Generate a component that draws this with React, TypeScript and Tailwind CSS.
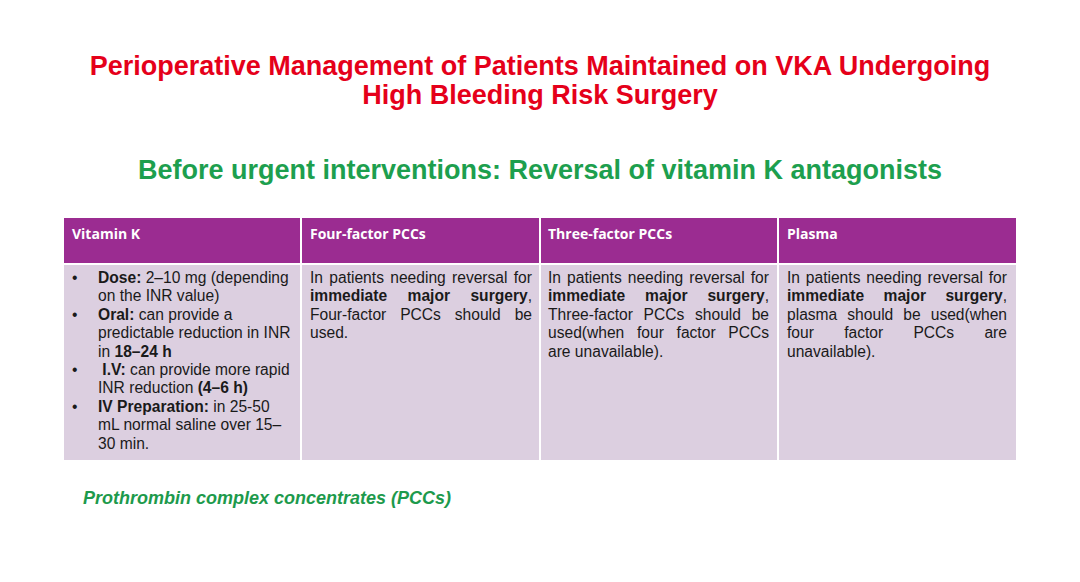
import React from "react";

function Bullet({ children }: { children: React.ReactNode }) {
  return (
    <li className="flex">
      <span className="w-[34px] shrink-0 pl-[8px]">•</span>
      <span>{children}</span>
    </li>
  );
}

const headCls =
  "bg-[#9b2c91] h-[45px] pt-[6px] text-white font-bold text-[14px] leading-[19px]";
const bodyCls = "bg-[#dccfe0] h-[195px] pt-[4px]";

export default function App() {
  return (
    <div
      className="w-[1080px] h-[582px] bg-white overflow-hidden"
      style={{ fontFamily: '"Liberation Sans", Arial, sans-serif' }}
    >
      <div className="pt-[52px] text-center text-[#e5001a] font-bold text-[27px] leading-[29px]">
        <div>Perioperative Management of Patients Maintained on VKA Undergoing</div>
        <div>High Bleeding Risk Surgery</div>
      </div>
      <div className="mt-[46px] text-center text-[#1d9f4e] font-bold text-[27px] leading-[28px]">
        Before urgent interventions: Reversal of vitamin K antagonists
      </div>
      <div className="ml-[64px] mt-[34px] w-[952px] grid grid-cols-[236px_237px_236px_237px] gap-x-[2px] gap-y-[2px] text-[15.6px] leading-[18.4px] text-[#1a1a1a]">
        <div className={headCls + " pl-[8px]"} style={{ fontFamily: '"Open Sans", sans-serif' }}>Vitamin K</div>
        <div className={headCls + " pl-[8px]"} style={{ fontFamily: '"Open Sans", sans-serif' }}>Four-factor PCCs</div>
        <div className={headCls + " pl-[7px]"} style={{ fontFamily: '"Open Sans", sans-serif' }}>Three-factor PCCs</div>
        <div className={headCls + " pl-[8px]"} style={{ fontFamily: '"Open Sans", sans-serif' }}>Plasma</div>
        <div className={bodyCls + " pr-[8px]"}>
          <ul>
            <Bullet><b>Dose:</b> 2–10 mg (depending on the INR value)</Bullet>
            <Bullet><b>Oral:</b> can provide a predictable reduction in INR in <b>18–24 h</b></Bullet>
            <Bullet>&nbsp;<b>I.V:</b> can provide more rapid INR reduction <b>(4–6 h)</b></Bullet>
            <Bullet><b>IV Preparation:</b> in 25-50 mL normal saline over 15–<wbr />30 min.</Bullet>
          </ul>
        </div>
        <div className={bodyCls + " pl-[8px] pr-[7px] text-justify"}>
          In patients needing reversal for <b>immediate major surgery</b>, Four-factor PCCs should be used.
        </div>
        <div className={bodyCls + " pl-[7px] pr-[8px] text-justify"}>
          In patients needing reversal for <b>immediate major surgery</b>, Three-factor PCCs should be used(when four factor PCCs are unavailable).
        </div>
        <div className={bodyCls + " pl-[8px] pr-[9px] text-justify"}>
          In patients needing reversal for <b>immediate major surgery</b>, plasma should be used(when four factor PCCs are unavailable).
        </div>
      </div>
      <div className="ml-[83px] mt-[27px] text-[#1d9a4c] font-bold italic text-[18px] leading-[22px]">
        Prothrombin complex concentrates (PCCs)
      </div>
    </div>
  );
}
